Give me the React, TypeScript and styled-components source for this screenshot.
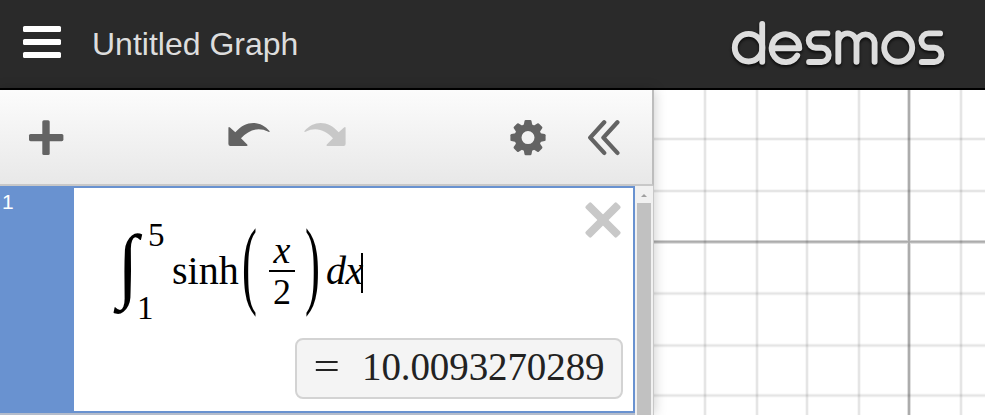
import React from 'react';
import styled, { createGlobalStyle } from 'styled-components';

const GlobalStyle = createGlobalStyle`
  * { box-sizing: border-box; }
  body { margin: 0; overflow: hidden; background: #fff; }
`;

const Page = styled.div`
  width: 985px;
  height: 415px;
  display: flex;
  flex-direction: column;
  overflow: hidden;
  font-family: "Liberation Sans", Arial, sans-serif;
`;

const Header = styled.header`
  flex: none;
  height: 90px;
  display: flex;
  align-items: flex-start;
  background: #2a2a2a;
  border-bottom: 2px solid #000;
`;

const MenuButton = styled.div`
  width: 38px;
  margin: 26px 0 0 23px;
  display: flex;
  flex-direction: column;
  gap: 7px;
`;

const MenuBar = styled.span`
  height: 6px;
  border-radius: 1.5px;
  background: #fff;
`;

const Title = styled.h1`
  margin: 26px 0 0 31px;
  font-size: 32px;
  line-height: 36px;
  font-weight: 400;
  color: #ddd;
  white-space: nowrap;
`;

const Logo = styled.svg`
  display: block;
  margin: 10px 30px 0 auto;
  filter: drop-shadow(0 2px 1.5px rgba(0, 0, 0, 0.75));
`;

const Main = styled.main`
  flex: 1;
  min-height: 0;
  display: flex;
`;

const Panel = styled.section`
  position: relative;
  z-index: 1;
  width: 654px;
  flex: none;
  display: flex;
  flex-direction: column;
  box-shadow: 0 0 12px rgba(0, 0, 0, 0.22);
`;

const Toolbar = styled.div`
  flex: none;
  height: 96px;
  display: flex;
  align-items: flex-start;
  padding-top: 30px;
  background: linear-gradient(#fcfcfc, #e8e8e8) padding-box;
  border-right: 2px solid #bdbdbd;
  border-bottom: 2px solid #c8c8c8;
`;

const ToolIcon = styled.svg<{ $gap: number; $tone?: string }>`
  flex: none;
  display: block;
  margin-left: ${p => p.$gap}px;
  color: ${p => p.$tone || '#636363'};
`;

const ListArea = styled.div`
  flex: 1;
  min-height: 0;
  display: flex;
`;

const ExpressionList = styled.div`
  width: 635px;
  background: #b4bccb;
`;

const Expression = styled.div`
  height: 227px;
  display: flex;
  border: 2px solid #6992d0;
  border-left: 0;
  background: #fff;
`;

const RowTab = styled.div`
  width: 74px;
  flex: none;
  padding: 2px 0 0 2px;
  background: #6992d0;
  color: #fff;
  font-size: 21px;
  line-height: 24px;
`;

const RowBody = styled.div`
  flex: 1;
  display: flex;
  flex-direction: column;
`;

const Entry = styled.div`
  height: 150px;
  display: flex;
  justify-content: space-between;
`;

const Formula = styled.div`
  display: flex;
  align-items: flex-start;
  height: 150px;
  padding-left: 38px;
  color: #000;
  font-family: "Liberation Serif", "Times New Roman", serif;
`;

const IntegralSign = styled.span`
  display: block;
  width: 32px;
  height: 82px;
  margin-top: 36px;
  font-size: 40px;
  line-height: 82px;
  text-align: center;
  transform: scale(1.9, 2.06);
`;

const Bounds = styled.span`
  width: 28px;
  display: flex;
  flex-direction: column;
  font-size: 33px;
  line-height: 36px;
  margin-top: 29px;
`;

const Upper = styled.span`
  padding-left: 4px;
`;

const Lower = styled.span`
  margin-top: 37px;
  margin-left: -7px;
`;

const FunctionName = styled.span`
  width: 69px;
  margin-top: 60px;
  font-size: 40px;
  line-height: 46px;
`;

const Paren = styled.span`
  width: 17px;
  height: 86px;
  margin-top: 34px;
  font-size: 40px;
  line-height: 86px;
  text-align: center;
  transform: scale(1.12, 2.42);
`;

const Fraction = styled.span`
  width: 26px;
  margin: 50px 9px 0 11px;
  display: flex;
  flex-direction: column;
  align-items: center;
`;

const Numerator = styled.span`
  height: 34px;
  width: 100%;
  border-bottom: 2px solid #000;
  font-size: 38px;
  line-height: 24px;
  font-style: italic;
  text-align: center;
`;

const Denominator = styled.span`
  font-size: 36px;
  line-height: 40px;
`;

const Differential = styled.span`
  margin: 60px 0 0 5px;
  font-size: 40px;
  line-height: 46px;
  font-style: italic;
  letter-spacing: -0.5px;
`;

const Caret = styled.span`
  width: 2px;
  height: 40px;
  margin: 65px 0 0 -2px;
  background: #000;
`;

const DeleteIcon = styled.svg`
  flex: none;
  margin: 12px 10px 0 0;
`;

const Answer = styled.div`
  align-self: flex-end;
  width: 328px;
  height: 61px;
  margin-right: 10px;
  display: flex;
  background: #f4f4f4;
  border: 2px solid #d3d3d3;
  border-radius: 8px;
  font-family: "Liberation Serif", "Times New Roman", serif;
  font-size: 39px;
  line-height: 54px;
  color: #222;
`;

const Equals = styled.span`
  width: 24px;
  margin-left: 19px;
  transform: scaleX(1.2);
`;

const Value = styled.span`
  margin-left: 22px;
  letter-spacing: -0.1px;
`;

const Scrollbar = styled.div`
  width: 19px;
  display: flex;
  flex-direction: column;
  align-items: center;
  padding-right: 1px;
  background: #f1f1f1;
  border-right: 1px solid #c8c8c8;
`;

const ScrollArrow = styled.span`
  width: 0;
  height: 0;
  margin: 8px 0 6px;
  border: 3px solid transparent;
  border-top: 0;
  border-bottom-color: #a0a0a0;
`;

const ScrollThumb = styled.span`
  width: 14px;
  flex: 1;
  background: #c1c1c1;
`;

const Graph = styled.svg`
  flex: none;
  display: block;
`;

const S_STROKE = 'h-11.5a7.2 7.2 0 0 0 0 14.4h5.7a7.1 7.1 0 0 1 0 14.2h-12.5';

function DesmosLogo() {
  return (
    <Logo width="225" height="65" viewBox="730 10 225 65" role="img" aria-label="desmos">
      <g fill="none" stroke="#ddd" strokeWidth="5.9" strokeLinecap="round" strokeLinejoin="round">
        <circle cx="748.6" cy="47.7" r="13.8" />
        <path d="M762.2 24V61.7" />
        <path d="M772.6 48.2H799.3A13.8 13.9 0 1 0 797.2 55.6" />
        <path d={`M827.4 33.4${S_STROKE}`} />
        <path d="M838.3 61.7V33.2M838.3 42.5a9.1 9.1 0 0 1 18.2 0V61.7M856.5 42.5a9.1 9.1 0 0 1 18.1 0V61.7" />
        <circle cx="898.2" cy="47.7" r="14" />
        <path d={`M940.1 33.4${S_STROKE}`} />
      </g>
    </Logo>
  );
}

const ARROW =
  'M228.4 128.4Q228.4 126.3 230 127.6L235.3 132.3C246 119.8 260.5 120.2 269.7 131.2Q269.6 132.3 268.5 131.7C258 126.4 248.5 130 241 138.3L247.2 144.4Q248.2 146 246.5 146H230.4Q228.4 146 228.4 144Z';

const GRID_X = [705, 757, 807, 859, 961];
const GRID_Y = [139, 191, 293.5, 345.5, 395.5];

function GraphPaper() {
  return (
    <Graph width="331" height="325" viewBox="654 90 331 325">
      <g stroke="#000" strokeOpacity="0.03" strokeWidth="4">
        {GRID_X.map(x => <path key={x} d={`M${x} 90V415`} />)}
        {GRID_Y.map(y => <path key={y} d={`M654 ${y}H985`} />)}
      </g>
      <g stroke="#000" strokeOpacity="0.07" strokeWidth="2">
        {GRID_X.map(x => <path key={x} d={`M${x} 90V415`} />)}
        {GRID_Y.map(y => <path key={y} d={`M654 ${y}H985`} />)}
      </g>
      <g stroke="#000">
        <path d="M909 90V415M654 242H985" strokeOpacity="0.12" strokeWidth="4" />
        <path d="M909 90V415M654 241.7H985" strokeOpacity="0.23" strokeWidth="2" />
      </g>
    </Graph>
  );
}

export default function App() {
  return (
    <Page>
      <GlobalStyle />
      <Header>
        <MenuButton>
          <MenuBar />
          <MenuBar />
          <MenuBar />
        </MenuButton>
        <Title>Untitled Graph</Title>
        <DesmosLogo />
      </Header>
      <Main>
        <Panel>
          <Toolbar>
            <ToolIcon $gap={28} width="37" height="36" viewBox="28 120 37 36">
              <g fill="currentColor">
                <rect x="42.3" y="120.2" width="7.4" height="34.8" rx="1.6" />
                <rect x="29" y="134" width="34.4" height="7.2" rx="1.6" />
              </g>
            </ToolIcon>
            <ToolIcon $gap={162} width="44" height="36" viewBox="227 120 44 36">
              <path d={ARROW} fill="currentColor" />
            </ToolIcon>
            <ToolIcon $gap={32} $tone="#c8c8c8" width="44" height="36" viewBox="303 120 44 36">
              <path d={ARROW} transform="translate(574 0) scale(-1 1)" fill="currentColor" />
            </ToolIcon>
            <ToolIcon $gap={162} width="38" height="37" viewBox="509 120 38 37">
              <g transform="translate(528 137.6)">
                <circle r="10" fill="none" stroke="currentColor" strokeWidth="7" />
                {[0, 45, 90, 135, 180, 225, 270, 315].map(a => (
                  <path
                    key={a}
                    transform={`rotate(${a})`}
                    d="M-4.6 -11L-3.5 -16.6Q-3.3 -17.6 -2.3 -17.6H2.3Q3.3 -17.6 3.5 -16.6L4.6 -11Z"
                    fill="currentColor"
                  />
                ))}
              </g>
            </ToolIcon>
            <ToolIcon $gap={40} width="35" height="37" viewBox="587 120 35 37">
              <path
                d="M604.2 122.3L590.2 137.6L604.2 152.9M617.4 122.3L603.4 137.6L617.4 152.9"
                fill="none"
                stroke="currentColor"
                strokeWidth="4.3"
                strokeLinecap="round"
                strokeLinejoin="round"
              />
            </ToolIcon>
          </Toolbar>
          <ListArea>
            <ExpressionList>
              <Expression>
                <RowTab>1</RowTab>
                <RowBody>
                  <Entry>
                    <Formula>
                      <IntegralSign>∫</IntegralSign>
                      <Bounds>
                        <Upper>5</Upper>
                        <Lower>1</Lower>
                      </Bounds>
                      <FunctionName>sinh</FunctionName>
                      <Paren>(</Paren>
                      <Fraction>
                        <Numerator>x</Numerator>
                        <Denominator>2</Denominator>
                      </Fraction>
                      <Paren>)</Paren>
                      <Differential>dx</Differential>
                      <Caret />
                    </Formula>
                    <DeleteIcon width="40" height="40" viewBox="583 200 40 40">
                      <g fill="#c8c8c8" transform="translate(603 220) rotate(45)">
                        <rect x="-22" y="-4" width="44" height="8" rx="1.8" />
                        <rect x="-4" y="-22" width="8" height="44" rx="1.8" />
                      </g>
                    </DeleteIcon>
                  </Entry>
                  <Answer>
                    <Equals>=</Equals>
                    <Value>10.0093270289</Value>
                  </Answer>
                </RowBody>
              </Expression>
            </ExpressionList>
            <Scrollbar>
              <ScrollArrow />
              <ScrollThumb />
            </Scrollbar>
          </ListArea>
        </Panel>
        <GraphPaper />
      </Main>
    </Page>
  );
}
